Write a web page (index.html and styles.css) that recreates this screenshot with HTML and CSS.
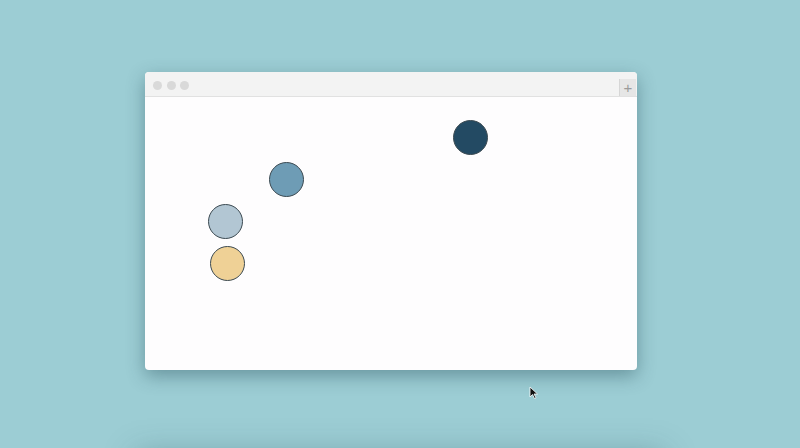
FILE: index.html
```html
<!DOCTYPE html>
<html>
<head>
<meta charset="utf-8">
<link rel="stylesheet" href="styles.css">
</head>
<body>
<div class="desktop">
  <div class="window">
    <div class="titlebar">
      <div class="dots"><span class="dot"></span><span class="dot"></span><span class="dot"></span></div>
      <div class="newtab">+</div>
    </div>
    <div class="content">
      <span class="node n-dark"></span>
      <span class="node n-mid"></span>
      <span class="node n-light"></span>
      <span class="node n-yellow"></span>
    </div>
  </div>
  <div class="window2"></div>
  <svg class="cursor" width="10" height="14" viewBox="0 0 10 14"><path d="M1 1 L1 11 L3.5 8.5 L5.5 12.5 L7 11.8 L5 8 L8.5 8 Z" fill="#111" stroke="#fff" stroke-width="0.8"/></svg>
</div>
</body>
</html>
```
FILE: styles.css
```css
html, body { margin: 0; padding: 0; }
body { font-family: "Liberation Sans", Arial, sans-serif; }
.desktop {
  position: relative;
  width: 800px;
  height: 448px;
  background: #9ccdd4;
  overflow: hidden;
}
.window {
  position: absolute;
  left: 145px;
  top: 72px;
  width: 492px;
  height: 298px;
  background: #fefdfe;
  border-radius: 4px;
  box-shadow: 0 6px 18px rgba(40, 80, 90, 0.45);
  display: flex;
  flex-direction: column;
  overflow: hidden;
}
.titlebar {
  height: 24px;
  background: #f3f3f3;
  border-bottom: 1px solid #e1e1e1;
  display: flex;
  align-items: center;
  justify-content: space-between;
  flex-shrink: 0;
}
.dots { display: flex; gap: 4.5px; padding-left: 8px; margin-top: 2px; }
.dot { width: 9px; height: 9px; border-radius: 50%; background: #d9d9d9; }
.newtab {
  align-self: flex-end;
  width: 16px;
  height: 17px;
  margin-right: 1px;
  background: #e6e6e6;
  border-left: 1px solid #d6d6d6;
  color: #9a9a9a;
  font-size: 15px;
  line-height: 17px;
  text-align: center;
  font-weight: 300;
}
.content { position: relative; flex: 1; }
.node {
  position: absolute;
  width: 35px;
  height: 35px;
  border-radius: 50%;
  border: 1px solid #3c4a52;
  box-sizing: border-box;
}
.n-dark { left: 308px; top: 23px; background: #234a63; }
.n-mid { left: 124px; top: 65px; background: #6e9cb5; }
.n-light { left: 63px; top: 107px; background: #b2c6d3; }
.n-yellow { left: 65px; top: 149px; background: #efd196; }
.window2 {
  position: absolute;
  left: 140px;
  top: 458px;
  width: 520px;
  height: 200px;
  background: #9ccdd4;
  box-shadow: 0 0 30px 4px rgba(40, 80, 90, 0.35);
}
.cursor { position: absolute; left: 529px; top: 386px; }
```
